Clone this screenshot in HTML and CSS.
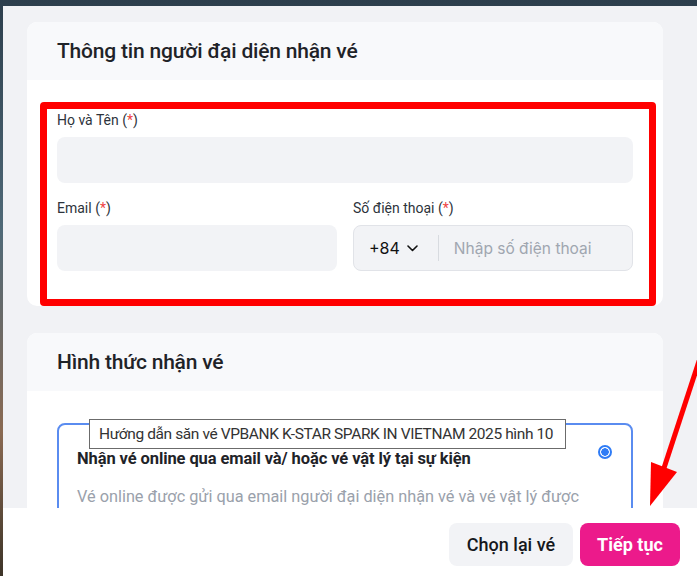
FILE: index.html
```html
<!DOCTYPE html>
<html lang="vi">
<head>
    <meta charset="UTF-8">
    <meta name="viewport" content="width=device-width, initial-scale=1.0">
    <title>Thông tin nhận vé</title>
    <link rel="stylesheet" href="styles.css">
</head>
<body>
    <div class="panel">
        <section class="card">
            <div class="card-head">Thông tin người đại diện nhận vé</div>
            <div class="card-body">
                <div class="highlight">
                    <div class="field">
                        <label>Họ và Tên (<span class="req">*</span>)</label>
                        <div class="input"></div>
                    </div>
                    <div class="row">
                        <div class="field">
                            <label>Email (<span class="req">*</span>)</label>
                            <div class="input"></div>
                        </div>
                        <div class="field">
                            <label>Số điện thoại (<span class="req">*</span>)</label>
                            <div class="input phone">
                                <span class="code">+84
                                    <svg width="11" height="7" viewBox="0 0 11 7"><path d="M1 1l4.5 4.5L10 1" fill="none" stroke="#111" stroke-width="1.6" stroke-linecap="round" stroke-linejoin="round"/></svg>
                                </span>
                                <span class="divider"></span>
                                <span class="placeholder">Nhập số điện thoại</span>
                            </div>
                        </div>
                    </div>
                </div>
            </div>
        </section>

        <section class="card second">
            <div class="card-head">Hình thức nhận vé</div>
            <div class="card-body">
                <div class="option">
                    <div class="option-title">Nhận vé online qua email và/ hoặc vé vật lý tại sự kiện</div>
                    <span class="radio"></span>
                    <div class="option-desc">Vé online được gửi qua email người đại diện nhận vé và vé vật lý được</div>
                </div>
            </div>
        </section>

        <div class="tooltip">Hướng dẫn săn vé VPBANK K-STAR SPARK IN VIETNAM 2025 hình 10</div>

        <footer class="footer">
            <button class="btn btn-light">Chọn lại vé</button>
            <button class="btn btn-pink">Tiếp tục</button>
        </footer>

        <svg class="arrow" width="697" height="576" viewBox="0 0 697 576">
            <line x1="702" y1="352" x2="664" y2="468" stroke="#f00" stroke-width="5"/>
            <polygon points="651,462 677,472 650,506" fill="#f00"/>
        </svg>
    </div>
</body>
</html>
```

FILE: styles.css
```css
* {
    box-sizing: border-box;
}

body {
    margin: 0;
    height: 576px;
    overflow: hidden;
    font-family: Roboto, "Noto Sans", Arial, sans-serif;
    background: linear-gradient(180deg, #2c3e4c 0%, #506a78 40%, #8a6a52 75%, #3d3428 100%);
}

.panel {
    margin: 6px 0 0 3px;
    height: 570px;
    background: #f1f2f5;
    padding: 16px 34px 0 24px;
    position: relative;
}

.card {
    border-radius: 10px;
    background: #fff;
}

.card.second {
    margin-top: 33px;
}

.card-head {
    height: 58px;
    padding: 0 30px;
    display: flex;
    align-items: center;
    background: #f8f9fb;
    border-radius: 10px 10px 0 0;
    font-size: 21px;
    font-weight: 500;
    color: #1f2328;
    letter-spacing: -0.2px;
}

.card-body {
    padding: 22px 7px 0 13px;
}

.highlight {
    border: 7px solid #f00;
    border-radius: 4px;
    height: 204px;
    margin-bottom: -6px;
    padding: 2px 16px 0 10px;
    display: flex;
    flex-direction: column;
    gap: 16px;
}

.row {
    display: flex;
    gap: 16px;
}

.row .field {
    flex: 1;
}

.field {
    display: flex;
    flex-direction: column;
    gap: 7px;
}

.field label {
    font-size: 14px;
    line-height: 19px;
    color: #2d333b;
}

.req {
    color: #ef4444;
}

.input {
    height: 46px;
    border-radius: 8px;
    background: #f2f3f6;
}

.input.phone {
    border: 1px solid #e1e3e8;
    display: flex;
    align-items: center;
    padding-left: 15px;
}

.code {
    font-size: 16px;
    color: #111;
    display: flex;
    align-items: center;
    gap: 7px;
    font-family: Inter, Roboto, sans-serif;
}

.divider {
    width: 1px;
    height: 26px;
    background: #d8dbe0;
    margin: 0 15px 0 20px;
}

.placeholder {
    font-size: 15.5px;
    color: #a0a6b0;
    font-family: Inter, Roboto, sans-serif;
}

.card.second .card-body {
    padding: 32px 30px 0 30px;
}

.option {
    border: 2px solid #5a8cf0;
    border-radius: 8px;
    height: 120px;
    padding: 24px 18px 0;
    position: relative;
}

.option-title {
    font-size: 16.5px;
    font-weight: 700;
    color: #1f2328;
    line-height: 20px;
    letter-spacing: -0.1px;
}

.option-desc {
    margin-top: 18px;
    font-size: 16.3px;
    color: #9aa1ab;
    line-height: 20px;
}

.radio {
    position: absolute;
    top: 20px;
    right: 19px;
    width: 14px;
    height: 14px;
    border-radius: 50%;
    border: 2px solid #2f7cf6;
    background: radial-gradient(circle, #2f7cf6 0 3.5px, #fff 4px);
}

.tooltip {
    position: absolute;
    left: 86px;
    top: 413px;
    width: 477px;
    height: 30px;
    background: #fff;
    border: 1px solid #6b6b6b;
    font-size: 15.5px;
    color: #333;
    display: flex;
    align-items: center;
    padding-left: 9px;
    white-space: nowrap;
    letter-spacing: -0.4px;
}

.footer {
    position: absolute;
    left: 0;
    right: 0;
    top: 502px;
    height: 68px;
    background: #fff;
    display: flex;
    justify-content: flex-end;
    align-items: flex-start;
    gap: 7px;
    padding: 15px 17px 0 0;
}

.btn {
    height: 43px;
    border: none;
    border-radius: 8px;
    font-family: Roboto, Arial, sans-serif;
    font-size: 18px;
    padding: 0 17px;
}

.btn-light {
    width: 124px;
    background: #f2f3f6;
    color: #15181c;
    font-weight: 500;
}

.btn-pink {
    width: 100px;
    background: #ec1a8b;
    color: #fff;
    font-weight: 700;
}

.arrow {
    position: absolute;
    left: -3px;
    top: -6px;
    pointer-events: none;
}
```
